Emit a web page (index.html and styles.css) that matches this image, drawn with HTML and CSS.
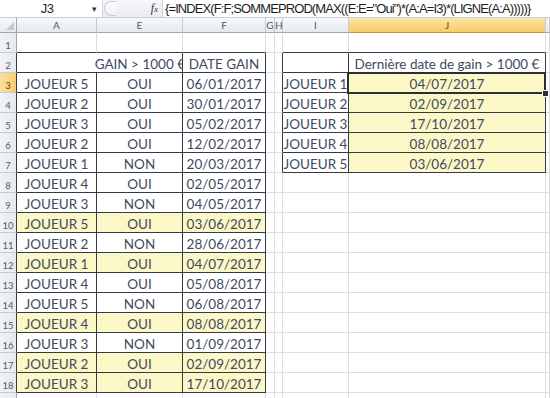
FILE: index.html
```html
<!DOCTYPE html>
<html lang="fr">
<head>
<meta charset="utf-8">
<title>Excel - Dernière date de gain</title>
<link rel="stylesheet" href="styles.css">
</head>
<body>
<div class="fbar">
  <div class="namebox"><span class="ref">J3</span><span class="dd">&#9662;</span></div>
  <div class="fxzone"><span class="pill"></span><span class="fx"><i>f</i><span class="x">x</span></span></div>
  <div class="formula">{=INDEX(F:F;SOMMEPROD(MAX((E:E="Oui")*(A:A=I3)*(LIGNE(A:A)))))}</div>
</div>
<div class="sheet">
  <div class="hrow">
    <div class="h corner"><svg width="8" height="8" viewBox="0 0 8 8"><polygon points="8,0 8,8 0,8" fill="#c3c8d0"/></svg></div>
    <div class="h">A</div><div class="h">E</div><div class="h">F</div><div class="h">G</div><div class="h">H</div><div class="h">I</div><div class="h act">J</div><div class="h"></div>
  </div>
  <div class="row"><div class="rh">1</div><div class="c tb"></div><div class="c tb"></div><div class="c tb"></div><div class="c"></div><div class="c"></div><div class="c tb"></div><div class="c tb"></div><div class="c"></div></div>
  <div class="row"><div class="rh tr">2</div><div class="c t span2"><span class="ovf">GAIN &gt; 1000 €</span></div><div class="c t">DATE GAIN</div><div class="c"></div><div class="c tr"></div><div class="c t"></div><div class="c t">Dernière date de gain &gt; 1000 €</div><div class="c"></div></div>
  <div class="row"><div class="rh tr act">3</div><div class="c t">JOUEUR 5</div><div class="c t">OUI</div><div class="c t">06/01/2017</div><div class="c"></div><div class="c tr"></div><div class="c t">JOUEUR 1</div><div class="c t y sel">04/07/2017</div><div class="c"></div></div>
  <div class="row"><div class="rh tr">4</div><div class="c t">JOUEUR 2</div><div class="c t">OUI</div><div class="c t">30/01/2017</div><div class="c"></div><div class="c tr"></div><div class="c t">JOUEUR 2</div><div class="c t y">02/09/2017</div><div class="c"></div></div>
  <div class="row"><div class="rh tr">5</div><div class="c t">JOUEUR 3</div><div class="c t">OUI</div><div class="c t">05/02/2017</div><div class="c"></div><div class="c tr"></div><div class="c t">JOUEUR 3</div><div class="c t y">17/10/2017</div><div class="c"></div></div>
  <div class="row"><div class="rh tr">6</div><div class="c t">JOUEUR 2</div><div class="c t">OUI</div><div class="c t">12/02/2017</div><div class="c"></div><div class="c tr"></div><div class="c t">JOUEUR 4</div><div class="c t y">08/08/2017</div><div class="c"></div></div>
  <div class="row"><div class="rh tr">7</div><div class="c t">JOUEUR 1</div><div class="c t">NON</div><div class="c t">20/03/2017</div><div class="c"></div><div class="c tr"></div><div class="c t">JOUEUR 5</div><div class="c t y">03/06/2017</div><div class="c"></div></div>
  <div class="row"><div class="rh tr">8</div><div class="c t">JOUEUR 4</div><div class="c t">OUI</div><div class="c t">02/05/2017</div><div class="c"></div><div class="c"></div><div class="c"></div><div class="c"></div><div class="c"></div></div>
  <div class="row"><div class="rh tr">9</div><div class="c t">JOUEUR 3</div><div class="c t">NON</div><div class="c t">04/05/2017</div><div class="c"></div><div class="c"></div><div class="c"></div><div class="c"></div><div class="c"></div></div>
  <div class="row"><div class="rh tr">10</div><div class="c t y">JOUEUR 5</div><div class="c t y">OUI</div><div class="c t y">03/06/2017</div><div class="c"></div><div class="c"></div><div class="c"></div><div class="c"></div><div class="c"></div></div>
  <div class="row"><div class="rh tr">11</div><div class="c t">JOUEUR 2</div><div class="c t">NON</div><div class="c t">28/06/2017</div><div class="c"></div><div class="c"></div><div class="c"></div><div class="c"></div><div class="c"></div></div>
  <div class="row"><div class="rh tr">12</div><div class="c t y">JOUEUR 1</div><div class="c t y">OUI</div><div class="c t y">04/07/2017</div><div class="c"></div><div class="c"></div><div class="c"></div><div class="c"></div><div class="c"></div></div>
  <div class="row"><div class="rh tr">13</div><div class="c t">JOUEUR 4</div><div class="c t">OUI</div><div class="c t">05/08/2017</div><div class="c"></div><div class="c"></div><div class="c"></div><div class="c"></div><div class="c"></div></div>
  <div class="row"><div class="rh tr">14</div><div class="c t">JOUEUR 5</div><div class="c t">NON</div><div class="c t">06/08/2017</div><div class="c"></div><div class="c"></div><div class="c"></div><div class="c"></div><div class="c"></div></div>
  <div class="row"><div class="rh tr">15</div><div class="c t y">JOUEUR 4</div><div class="c t y">OUI</div><div class="c t y">08/08/2017</div><div class="c"></div><div class="c"></div><div class="c"></div><div class="c"></div><div class="c"></div></div>
  <div class="row"><div class="rh tr">16</div><div class="c t">JOUEUR 3</div><div class="c t">NON</div><div class="c t">01/09/2017</div><div class="c"></div><div class="c"></div><div class="c"></div><div class="c"></div><div class="c"></div></div>
  <div class="row"><div class="rh tr">17</div><div class="c t y">JOUEUR 2</div><div class="c t y">OUI</div><div class="c t y">02/09/2017</div><div class="c"></div><div class="c"></div><div class="c"></div><div class="c"></div><div class="c"></div></div>
  <div class="row"><div class="rh tr">18</div><div class="c t y">JOUEUR 3</div><div class="c t y">OUI</div><div class="c t y">17/10/2017</div><div class="c"></div><div class="c"></div><div class="c"></div><div class="c"></div><div class="c"></div></div>
  <div class="row"><div class="rh"></div><div class="c"></div><div class="c"></div><div class="c"></div><div class="c"></div><div class="c"></div><div class="c"></div><div class="c"></div><div class="c"></div></div>
</div>
</body>
</html>
```

FILE: styles.css
```css
html, body {
  margin: 0;
  padding: 0;
  background: #ffffff;
  overflow: hidden;
}
body {
  width: 550px;
  height: 398px;
  font-family: Lato, "Open Sans", sans-serif;
}

/* ---------- formula bar ---------- */
.fbar {
  display: flex;
  height: 18px;
  box-sizing: border-box;
  border-bottom: 1px solid #c9ced6;
  font-family: "Liberation Sans", Arial, sans-serif;
}
.namebox {
  width: 103px;
  display: flex;
  align-items: center;
  background: #ffffff;
  border-right: 1px solid #d5d9df;
  box-sizing: border-box;
}
.ref {
  flex: 1;
  text-align: center;
  font-size: 13px;
  letter-spacing: -0.6px;
  color: #1e1e1e;
  padding-left: 2px;
}
.dd {
  font-size: 9px;
  color: #333;
  width: 10px;
}
.fxzone {
  width: 60px;
  display: flex;
  align-items: center;
  background: linear-gradient(#f6f7f9, #e9ecf0);
  border-right: 1px solid #c9ced6;
  box-sizing: border-box;
}
.pill {
  width: 12px;
  height: 15px;
  margin-left: 1px;
  border: 1px solid #c6cbd3;
  border-right: none;
  border-radius: 9px 0 0 9px;
  background: linear-gradient(#ffffff, #eef0f3);
  box-sizing: border-box;
}
.fx {
  margin-left: auto;
  margin-right: 4px;
  font-family: "Liberation Serif", serif;
  font-size: 12px;
  color: #3a3a3a;
  display: flex;
  align-items: baseline;
}
.fx .x {
  font-style: italic;
  font-size: 9px;
}
.formula {
  flex: 1;
  padding-left: 2px;
  font-size: 13px;
  letter-spacing: -0.9px;
  line-height: 17px;
  color: #1e1e1e;
  white-space: nowrap;
  overflow: hidden;
}

/* ---------- sheet grid ---------- */
.hrow, .row {
  display: grid;
  grid-template-columns: 17px 80px 86px 83px 9px 8px 66px 197px 1fr;
}
.hrow {
  height: 15px;
}
.row {
  height: 20px;
}
.h {
  box-sizing: border-box;
  border-right: 1px solid #c7ccd4;
  border-bottom: 1px solid #9ea6b2;
  background: linear-gradient(#f8f9fb, #e6e9ee);
  color: #4f5a68;
  font-size: 10px;
  line-height: 14px;
  text-align: center;
}
.h.act {
  background: linear-gradient(#fbe3a2, #f6cd6a);
  border-bottom-color: #c49a3c;
  color: #5a4a2a;
}
.corner {
  display: flex;
  align-items: flex-end;
  justify-content: flex-end;
  padding: 0 2px 2px 0;
  border-right-color: #9ea6b2;
}
.rh {
  box-sizing: border-box;
  border-right: 1px solid #9ea6b2;
  border-bottom: 1px solid #c7ccd4;
  background: linear-gradient(90deg, #f1f3f6, #e6e9ee);
  color: #4f5a68;
  font-size: 9.5px;
  line-height: 12px;
  padding-top: 7px;
  text-align: center;
}
.rh.act {
  background: linear-gradient(90deg, #fbe0a0, #f5cd6c);
  color: #5a4a2a;
}
.c {
  box-sizing: border-box;
  border-right: 1px solid #dadde2;
  border-bottom: 1px solid #dadde2;
  font-size: 13.5px;
  line-height: 16px;
  padding-top: 3px;
  color: #3e4a5e;
  text-align: center;
  white-space: nowrap;
  overflow: hidden;
}
.tb { border-bottom-color: #333a44; }
.tr { border-right-color: #333a44; }
.t {
  border-right-color: #333a44;
  border-bottom-color: #333a44;
}
.y { background: #fcf7c6; }
.span2 {
  grid-column: span 2;
  display: flex;
  justify-content: flex-end;
}
.ovf {
  margin-right: -3px;
}
.sel {
  position: relative;
  overflow: visible;
}
.sel::after {
  content: "";
  position: absolute;
  left: -2px;
  top: -1px;
  right: -1px;
  bottom: -2px;
  border: 2px solid #2a2e36;
}
.sel::before {
  content: "";
  position: absolute;
  right: -4px;
  bottom: -5px;
  width: 5px;
  height: 5px;
  background: #2a2e36;
  border: 1px solid #ffffff;
  z-index: 1;
}
```
